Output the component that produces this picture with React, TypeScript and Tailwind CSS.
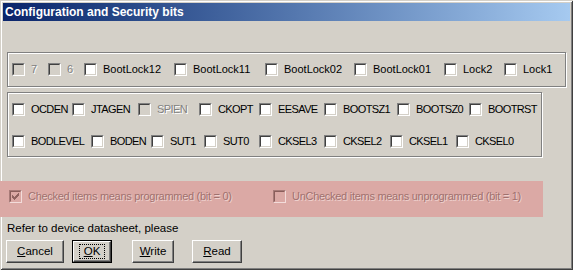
import React from "react";

const FONT = { fontFamily: '"Liberation Sans", Arial, sans-serif' };

function Box({ disabled }: { disabled?: boolean }) {
  return (
    <span className="block w-[13px] h-[13px] shrink-0 border border-t-[#808080] border-l-[#808080] border-b-white border-r-white">
      <span
        className={`block w-full h-full border border-t-[#404040] border-l-[#404040] border-b-[#d4d0c8] border-r-[#d4d0c8] ${
          disabled ? "bg-[#d4d0c8]" : "bg-white"
        }`}
      />
    </span>
  );
}

function PinkBox({ checked }: { checked?: boolean }) {
  return (
    <span className="block w-[13px] h-[13px] shrink-0 border border-t-[#a77b78] border-l-[#a77b78] border-b-[#f3dcda] border-r-[#f3dcda]">
      <span className="block w-full h-full border border-t-[#8a5e5b] border-l-[#8a5e5b] border-b-[#dba9a5] border-r-[#dba9a5] bg-[#dba9a5]">
        {checked && (
          <svg width="9" height="9" viewBox="0 0 9 9" className="block">
            <path
              d="M1 3h1v1h1v1h1V4h1V3h1V2h1V1h1v3H7v1H6v1H5v1H4v1H3V7H2V6H1z"
              fill="#8f6360"
            />
          </svg>
        )}
      </span>
    </span>
  );
}

type Item = { label: string; w?: number; disabled?: boolean };

function Check({ item, narrow }: { item: Item; narrow?: boolean }) {
  return (
    <div
      className="flex items-center shrink-0"
      style={item.w ? { width: item.w } : undefined}
    >
      <Box disabled={item.disabled} />
      <span
        className={`ml-[6px] text-[11px] leading-[13px] whitespace-nowrap ${
          narrow ? "tracking-[-0.6px]" : ""
        } ${
          item.disabled
            ? "text-[#808080] [text-shadow:1px_1px_0_#ffffff]"
            : "text-black"
        }`}
      >
        {item.label}
      </span>
    </div>
  );
}

const row1: Item[] = [
  { label: "7", w: 36, disabled: true },
  { label: "6", w: 36, disabled: true },
  { label: "BootLock12", w: 90 },
  { label: "BootLock11", w: 91 },
  { label: "BootLock02", w: 89 },
  { label: "BootLock01", w: 90 },
  { label: "Lock2", w: 60 },
  { label: "Lock1" },
];

const row2: Item[] = [
  { label: "OCDEN", w: 60 },
  { label: "JTAGEN", w: 66 },
  { label: "SPIEN", w: 61, disabled: true },
  { label: "CKOPT", w: 60 },
  { label: "EESAVE", w: 65 },
  { label: "BOOTSZ1", w: 73 },
  { label: "BOOTSZ0", w: 72 },
  { label: "BOOTRST" },
];

const row3: Item[] = [
  { label: "BODLEVEL", w: 79 },
  { label: "BODEN", w: 60 },
  { label: "SUT1", w: 53 },
  { label: "SUT0", w: 55 },
  { label: "CKSEL3", w: 65 },
  { label: "CKSEL2", w: 66 },
  { label: "CKSEL1", w: 66 },
  { label: "CKSEL0" },
];

function Btn({
  children,
  w,
  def,
  className = "",
}: {
  children: React.ReactNode;
  w: number;
  def?: boolean;
  className?: string;
}) {
  const inner = (
    <div className="h-full w-full flex items-center justify-center border border-t-white border-l-white border-b-[#404040] border-r-[#404040] shadow-[inset_-1px_-1px_0_#808080] text-[11.5px] text-black">
      {def ? (
        <span className="border border-dotted border-black px-[4px] h-[15px] flex items-center">
          {children}
        </span>
      ) : (
        children
      )}
    </div>
  );
  return (
    <div
      className={`h-[23px] shrink-0 ${def ? "border border-black" : ""} ${className}`}
      style={{ width: w }}
    >
      {inner}
    </div>
  );
}

export default function App() {
  return (
    <div
      style={FONT}
      className="w-[573px] h-[270px] bg-[#d4d0c8] p-[3px] overflow-hidden shadow-[inset_1px_1px_0_#d4d0c8,inset_-1px_-1px_0_#404040,inset_2px_2px_0_#ffffff,inset_-2px_-2px_0_#808080]"
    >
      <div className="h-[18px] bg-gradient-to-r from-[#0a246a] to-[#a6caf0] flex items-center pl-[2px]">
        <span className="text-white font-bold text-[12px] leading-[18px]">
          Configuration and Security bits
        </span>
      </div>

      <div className="ml-[4px] mt-[31px] w-[559px] h-[35px] border border-[#808080] shadow-[1px_1px_0_#ffffff,inset_1px_1px_0_#ffffff] pl-[4px] pt-[10px]">
        <div className="flex">
          {row1.map((it) => (
            <Check key={it.label} item={it} />
          ))}
        </div>
      </div>

      <div className="ml-[4px] mt-[5px] w-[535px] h-[65px] border border-[#808080] shadow-[1px_1px_0_#ffffff,inset_1px_1px_0_#ffffff] pl-[4px] pt-[10px] flex flex-col gap-[19px]">
        <div className="flex">
          {row2.map((it) => (
            <Check key={it.label} item={it} narrow />
          ))}
        </div>
        <div className="flex">
          {row3.map((it) => (
            <Check key={it.label} item={it} narrow />
          ))}
        </div>
      </div>

      <div className="-ml-[3px] mt-[24px] w-[543px] h-[36px] bg-[#dba9a5] flex pl-[9px] pt-[9px]">
        <div className="flex items-start w-[264px] shrink-0">
          <PinkBox checked />
          <span className="ml-[6px] text-[11px] leading-[13px] text-[#a0716e] [text-shadow:1px_1px_0_#efd2cf] whitespace-nowrap tracking-[-0.28px]">
            Checked items means programmed (bit = 0)
          </span>
        </div>
        <div className="flex items-start">
          <PinkBox />
          <span className="ml-[6px] text-[11px] leading-[13px] text-[#a0716e] [text-shadow:1px_1px_0_#efd2cf] whitespace-nowrap tracking-[-0.28px]">
            UnChecked items means unprogrammed (bit = 1)
          </span>
        </div>
      </div>

      <div className="ml-[4px] mt-[3px] h-[16px] text-[11.5px] leading-[16px] text-black">
        Refer to device datasheet, please
      </div>

      <div className="flex mt-[4px] ml-[3px]">
        <Btn w={58}>
          <span>
            <span className="underline">C</span>ancel
          </span>
        </Btn>
        <Btn w={40} def className="ml-[8px]">
          <span>
            <span className="underline">O</span>K
          </span>
        </Btn>
        <Btn w={42} className="ml-[20px]">
          <span>
            <span className="underline">W</span>rite
          </span>
        </Btn>
        <Btn w={50} className="ml-[18px]">
          <span>
            <span className="underline">R</span>ead
          </span>
        </Btn>
      </div>
    </div>
  );
}
